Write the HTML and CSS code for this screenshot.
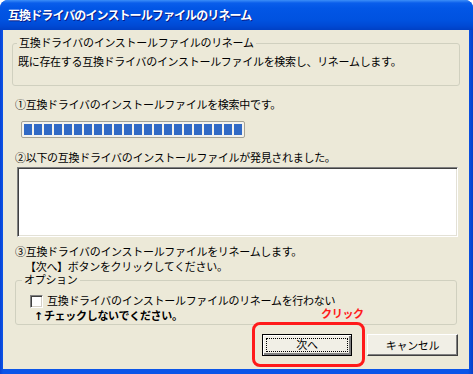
FILE: index.html
```html
<!DOCTYPE html>
<html lang="ja">
<head>
  <meta charset="UTF-8">
  <title>互換ドライバのインストールファイルのリネーム</title>
  <link rel="stylesheet" href="styles.css">
</head>
<body>
  <div class="window">
    <div class="titlebar">互換ドライバのインストールファイルのリネーム</div>

    <div class="client">
      <!-- description group -->
      <fieldset class="group intro">
        <legend>互換ドライバのインストールファイルのリネーム</legend>
        <p>既に存在する互換ドライバのインストールファイルを検索し、リネームします。</p>
      </fieldset>

      <p class="step step-search">①互換ドライバのインストールファイルを検索中です。</p>
      <div class="progress">
        <span></span><span></span><span></span><span></span><span></span><span></span>
        <span></span><span></span><span></span><span></span><span></span><span></span>
        <span></span><span></span><span></span><span></span><span></span><span></span>
        <span></span><span></span><span></span><span></span>
      </div>

      <p class="step step-found">②以下の互換ドライバのインストールファイルが発見されました。</p>
      <div class="listbox"></div>

      <p class="step step-rename">③互換ドライバのインストールファイルをリネームします。<br><span class="indent">【次へ】ボタンをクリックしてください。</span></p>

      <!-- options group -->
      <fieldset class="group options">
        <legend>オプション</legend>
        <label class="check-row">
          <input type="checkbox">
          <span>互換ドライバのインストールファイルのリネームを行わない</span>
        </label>
        <p class="warning"><span class="arrow">↑</span>チェックしないでください。</p>
      </fieldset>

      <div class="buttons">
        <button class="btn btn-default"><span class="focus">次へ</span></button>
        <button class="btn">キャンセル</button>
      </div>
    </div>

    <!-- annotation drawn over the dialog -->
    <div class="callout-label">クリック</div>
    <div class="callout-box"></div>
  </div>
</body>
</html>
```

FILE: styles.css
```css
:root {
  --face: #ECE9D8;
  --group-line: #D0D0BF;
  --chunk: #316AC5;
  --mark: #FF1A1A;
  --font-ui: "Liberation Sans", "Noto Sans CJK JP", sans-serif;
}

html, body {
  margin: 0;
  padding: 0;
  background: #fff;
}

body {
  font-family: var(--font-ui);
  font-size: 11px;
  letter-spacing: -0.3px;
  color: #000;
}

p {
  margin: 0;
}

.window {
  position: relative;
  width: 473px;
  height: 374px;
  border-radius: 8px 8px 0 0;
  background: linear-gradient(to right, #0842D4 0, #0B55E8 3px, #0B55E8 468px, #0740C8 473px);
  overflow: hidden;
}

/* Title bar */
.titlebar {
  height: 30px;
  line-height: 33px;
  padding-left: 8px;
  font-size: 12px;
  font-weight: bold;
  letter-spacing: -0.9px;
  color: #fff;
  text-shadow: 1px 1px #0A1883;
  background: linear-gradient(to bottom, #3C8EF8 0, #0A5EEB 3px, #0256E6 8px, #0052E0 20px, #0049D4 26px, #0040C4 30px);
}

.client {
  height: 339px;
  margin: 0 4px 0 3px;
  padding-top: 6px;
  box-sizing: border-box;
  background: var(--face);
}

/* Group boxes */
.group {
  border: 1px solid var(--group-line);
  border-radius: 3px;
  margin: 0;
  min-width: 0;
}

.group legend {
  padding: 0 2px;
  line-height: 14px;
}

.intro {
  margin: 0 9px;
  padding: 0 0 15px 4px;
}

.intro p {
  margin: 5px 0 0 1px;
  line-height: 15px;
}

.step {
  line-height: 15px;
  margin-left: 12px;
}

.step-search {
  margin-top: 12px;
}

/* Progress bar */
.progress {
  display: flex;
  gap: 2px;
  width: 224px;
  height: 17px;
  margin: 8px 0 0 18px;
  padding: 2px 2px;
  box-sizing: border-box;
  border: 1px solid #A5A397;
  border-radius: 2px;
  background: #F4F3EE;
}

.progress span {
  width: 8px;
  background: var(--chunk);
}

.step-found {
  margin-top: 13px;
}

/* List box */
.listbox {
  width: 441px;
  height: 70px;
  margin: 1px 0 0 14px;
  box-sizing: border-box;
  background: #fff;
  border: 1px solid;
  border-color: #808080 #fff #fff #808080;
  box-shadow: inset 1px 1px #404040, inset -1px -1px #E3E1D6;
}

.step-rename {
  margin-top: 8px;
}

.indent {
  padding-left: 10px;
}

.options {
  margin: -2px 12px 0;
  padding: 0 0 0 6px;
}

.check-row {
  display: flex;
  align-items: center;
  gap: 4px;
  margin: 7px 0 0 8px;
  line-height: 15px;
}

.check-row input {
  appearance: none;
  -webkit-appearance: none;
  width: 13px;
  height: 13px;
  margin: 0;
  background: #fff;
  border: 1px solid;
  border-color: #808080 #fff #fff #808080;
  box-shadow: inset 1px 1px #404040, inset -1px -1px #D4D0C8;
}

.warning {
  margin-left: 12px;
  line-height: 14px;
  font-weight: bold;
}

.warning .arrow {
  font-family: "DejaVu Sans", sans-serif;
  font-size: 11px;
  margin-right: 1px;
}

/* Buttons */
.buttons {
  display: flex;
  justify-content: flex-end;
  gap: 15px;
  margin-top: 9px;
  padding-right: 11px;
}

.btn {
  width: 91px;
  height: 22px;
  padding: 0;
  font-family: var(--font-ui);
  font-size: 11px;
  letter-spacing: -0.3px;
  color: #000;
  background: #F1EFE6;
  border: 1px solid;
  border-color: #fff #404040 #404040 #fff;
  box-shadow: inset -1px -1px #808080;
}

.btn-default {
  width: 90px;
  border: 1px solid #000;
  box-shadow: inset 1px 1px #fff, inset -2px -2px #808080;
  padding: 3px;
}

.btn-default .focus {
  display: block;
  height: 100%;
  box-sizing: border-box;
  line-height: 13px;
  border: 1px dotted #000;
}

/* Red annotation */
.callout-label {
  position: absolute;
  left: 321px;
  top: 306px;
  line-height: 16px;
  font-size: 11px;
  font-weight: bold;
  color: var(--mark);
}

.callout-box {
  position: absolute;
  left: 252px;
  top: 322px;
  width: 113px;
  height: 45px;
  box-sizing: border-box;
  border: 3px solid var(--mark);
  border-radius: 8px;
}
```
